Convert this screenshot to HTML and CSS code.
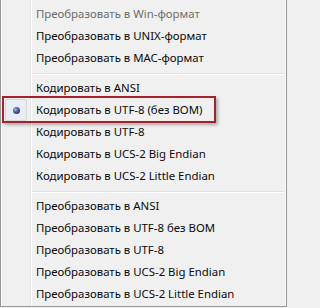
FILE: index.html
```html
<!DOCTYPE html>
<html lang="ru">
<head>
<meta charset="utf-8">
<link rel="stylesheet" href="styles.css">
</head>
<body>
<div class="menu">
  <div class="item disabled">Преобразовать в Win-формат</div>
  <div class="item">Преобразовать в UNIX-формат</div>
  <div class="item">Преобразовать в MAC-формат</div>
  <div class="sep"></div>
  <div class="item">Кодировать в ANSI</div>
  <div class="item checked">
    <span class="check"><span class="bullet"></span></span>
    Кодировать в UTF-8 (без BOM)
    <span class="mark"></span>
  </div>
  <div class="item">Кодировать в UTF-8</div>
  <div class="item">Кодировать в UCS-2 Big Endian</div>
  <div class="item">Кодировать в UCS-2 Little Endian</div>
  <div class="sep"></div>
  <div class="item">Преобразовать в ANSI</div>
  <div class="item">Преобразовать в UTF-8 без BOM</div>
  <div class="item">Преобразовать в UTF-8</div>
  <div class="item">Преобразовать в UCS-2 Big Endian</div>
  <div class="item">Преобразовать в UCS-2 Little Endian</div>
</div>
</body>
</html>
```
FILE: styles.css
```css
html, body {
  margin: 0;
  padding: 0;
  background: #f0f0f0;
}
.menu {
  width: 287px;
  box-sizing: border-box;
  border-left: 1px solid #979797;
  border-right: 1px solid #979797;
  border-bottom: 1px solid #979797;
  padding: 3px 0 1px 0;
  background:
    linear-gradient(to right, transparent 29px, #e2e3e3 29px, #e2e3e3 30px, #ffffff 30px, #ffffff 31px, transparent 31px),
    #f0f0f0;
  box-shadow: inset 1px 0 0 #fcfcfc, inset -1px 0 0 #fcfcfc;
  font-family: "Noto Sans", "Open Sans", sans-serif;
  font-size: 11.4px;
  color: #0a0a0a;
}
.item {
  position: relative;
  height: 22px;
  line-height: 22px;
  padding-left: 35px;
  white-space: nowrap;
}
.item.disabled {
  color: #6d6d6d;
}
.sep {
  height: 8px;
  margin-left: 31px;
  margin-right: 2px;
  background: linear-gradient(to bottom, transparent 4px, #e0e0e0 4px, #e0e0e0 5px, #ffffff 5px, #ffffff 6px, transparent 6px);
}
.check {
  position: absolute;
  left: 4px;
  top: 0;
  width: 20px;
  height: 20px;
  border: 1px solid #d4d9e0;
  border-radius: 2px;
  background: #eaedf1;
  display: flex;
  align-items: center;
  justify-content: center;
}
.bullet {
  width: 7px;
  height: 7px;
  border-radius: 50%;
  background: radial-gradient(circle at 35% 35%, #aab2e6 0, #4b55a8 45%, #161c5a 100%);
}
.mark {
  position: absolute;
  left: 1px;
  top: -3px;
  width: 214px;
  height: 27px;
  box-sizing: border-box;
  border: 2px solid #a5222c;
  box-shadow: 2px 2px 3px rgba(0, 0, 0, 0.28);
}
```
